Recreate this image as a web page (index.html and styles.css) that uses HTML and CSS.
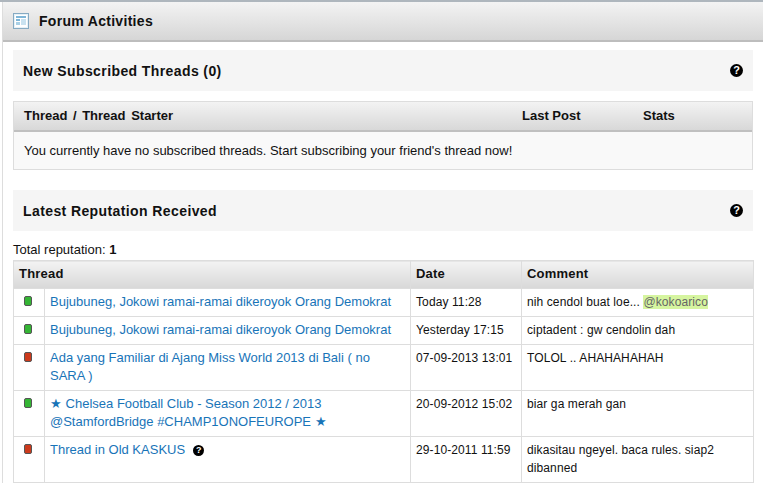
FILE: index.html
```html
<!DOCTYPE html>
<html lang="en">
<head>
    <meta charset="UTF-8">
    <title>Forum Activities</title>
    <link rel="stylesheet" href="styles.css">
</head>
<body>
    <div class="topline"></div>
    <div class="panel">
        <div class="panel-head">
            <svg class="panel-icon" width="16" height="16" viewBox="0 0 16 16">
                <rect x="0.5" y="0.5" width="15" height="15" fill="#e6f1f7" stroke="#86aac2"/>
                <rect x="2" y="2" width="12" height="12" fill="#ffffff"/>
                <rect x="3" y="3" width="10" height="2" fill="#7fb6d8"/>
                <rect x="3" y="6" width="4" height="2" fill="#7fb6d8"/>
                <rect x="3" y="9" width="4" height="3" fill="#a9d0e6"/>
                <rect x="8" y="6" width="5" height="6" fill="#c9e2f0"/>
            </svg>
            <h1>Forum Activities</h1>
        </div>
        <div class="panel-body">
            <div class="section-bar">
                <h2>New Subscribed Threads (0)</h2>
                <span class="help">?</span>
            </div>
            <div class="sub-box">
                <div class="sub-head">
                    <span class="sub-col-thread">Thread / Thread Starter</span>
                    <span class="sub-col-post">Last Post</span>
                    <span>Stats</span>
                </div>
                <p class="sub-empty">You currently have no subscribed threads. Start subscribing your friend's thread now!</p>
            </div>
            <div class="section-bar section-rep">
                <h2>Latest Reputation Received</h2>
                <span class="help">?</span>
            </div>
            <p class="total">Total reputation: <b>1</b></p>
            <table class="rep">
                <colgroup>
                    <col class="col-dot">
                    <col class="col-title">
                    <col class="col-date">
                    <col class="col-comment">
                </colgroup>
                <thead>
                    <tr>
                        <th colspan="2">Thread</th>
                        <th>Date</th>
                        <th>Comment</th>
                    </tr>
                </thead>
                <tbody>
                    <tr>
                        <td class="dot-cell"><span class="dot good"></span></td>
                        <td class="title"><a href="#">Bujubuneg, Jokowi ramai-ramai dikeroyok Orang Demokrat</a></td>
                        <td>Today 11:28</td>
                        <td>nih cendol buat loe... <span class="mention">@kokoarico</span></td>
                    </tr>
                    <tr>
                        <td class="dot-cell"><span class="dot good"></span></td>
                        <td class="title"><a href="#">Bujubuneg, Jokowi ramai-ramai dikeroyok Orang Demokrat</a></td>
                        <td>Yesterday 17:15</td>
                        <td>ciptadent : gw cendolin dah</td>
                    </tr>
                    <tr>
                        <td class="dot-cell"><span class="dot bad"></span></td>
                        <td class="title"><a href="#">Ada yang Familiar di Ajang Miss World 2013 di Bali ( no SARA )</a></td>
                        <td>07-09-2013 13:01</td>
                        <td>TOLOL .. AHAHAHAHAH</td>
                    </tr>
                    <tr>
                        <td class="dot-cell"><span class="dot good"></span></td>
                        <td class="title"><a href="#">★ Chelsea Football Club - Season 2012 / 2013 @StamfordBridge #CHAMP1ONOFEUROPE ★</a></td>
                        <td>20-09-2012 15:02</td>
                        <td>biar ga merah gan</td>
                    </tr>
                    <tr>
                        <td class="dot-cell"><span class="dot bad"></span></td>
                        <td class="title"><a href="#">Thread in Old KASKUS</a><span class="help help-small">?</span></td>
                        <td>29-10-2011 11:59</td>
                        <td>dikasitau ngeyel. baca rules. siap2 dibanned</td>
                    </tr>
                </tbody>
            </table>
        </div>
    </div>
</body>
</html>
```

FILE: styles.css
```css
body {
    font-family: "Liberation Sans", Arial, sans-serif;
    font-size: 12px;
    margin: 0;
    padding: 0;
    background-color: #fff;
    color: #111;
    height: 500px;
    overflow: hidden;
}
.topline {
    height: 2px;
    background-color: #aeb6bd;
}
.panel {
    margin-left: 2px;
    border-left: 1px solid #ddd;
}
.panel-head {
    height: 38px;
    display: flex;
    align-items: center;
    padding-left: 10px;
    gap: 10px;
    background: linear-gradient(#f3f3f3, #d6d6d6);
    border-bottom: 2px solid #bdbdbd;
}
.panel-head h1 {
    margin: 0;
    font-size: 14px;
    font-weight: bold;
    letter-spacing: 0.3px;
    color: #111;
}
.panel-body {
    padding: 8px 10px 0 10px;
}
.section-bar {
    height: 41px;
    display: flex;
    align-items: center;
    justify-content: space-between;
    padding: 0 10px;
    background-color: #f5f5f5;
}
.section-bar h2 {
    margin: 0;
    font-size: 14px;
    font-weight: bold;
    letter-spacing: 0.4px;
}
.section-rep {
    margin-top: 20px;
}
.help {
    width: 13px;
    height: 13px;
    border-radius: 50%;
    background-color: #000;
    color: #fff;
    font-size: 11px;
    font-weight: bold;
    line-height: 13px;
    text-align: center;
    display: inline-block;
}
.help-small {
    width: 11px;
    height: 11px;
    line-height: 11px;
    font-size: 9px;
    margin-left: 8px;
    vertical-align: 1px;
}
.sub-box {
    margin-top: 10px;
    border: 1px solid #ddd;
}
.sub-head {
    height: 27px;
    padding-bottom: 1px;
    display: flex;
    align-items: center;
    padding-left: 10px;
    font-weight: bold;
    font-size: 13px;
    background: linear-gradient(#f3f3f3, #d8d8d8);
    border-bottom: 2px solid #c0c0c0;
}
.sub-col-thread {
    width: 498px;
    word-spacing: 2px;
}
.sub-col-post {
    width: 121px;
}
.sub-empty {
    margin: 0;
    height: 37px;
    line-height: 37px;
    padding-left: 10px;
    font-size: 13px;
    background-color: #f9f9f9;
}
.total {
    margin: 11px 0 2px 0;
    line-height: 16px;
    font-size: 13px;
}
.rep {
    width: 740px;
    border-collapse: collapse;
    table-layout: fixed;
    letter-spacing: 0.1px;
}
.rep th, .rep td {
    border: 1px solid #ddd;
    text-align: left;
    vertical-align: top;
    padding: 4px 5px 5px 5px;
    line-height: 18px;
}
.rep th {
    height: 18px;
    font-size: 13px;
    letter-spacing: 0.2px;
    background: linear-gradient(#f3f3f3, #d8d8d8);
}
.col-dot {
    width: 31px;
}
.col-title {
    width: 366px;
}
.col-date {
    width: 111px;
}
.col-comment {
    width: 232px;
}
.rep td.dot-cell {
    padding: 7px 0 0 10px;
}
.rep td.title {
    font-size: 13px;
    letter-spacing: 0;
}
.rep a {
    color: #1874b8;
    text-decoration: none;
}
.dot {
    display: block;
    width: 6px;
    height: 8px;
    border: 1px solid #555;
    border-radius: 2px;
}
.good {
    background-color: #35b535;
}
.bad {
    background-color: #cc3a1c;
}
.mention {
    background-color: #d6f5a0;
    color: #666;
}
```
